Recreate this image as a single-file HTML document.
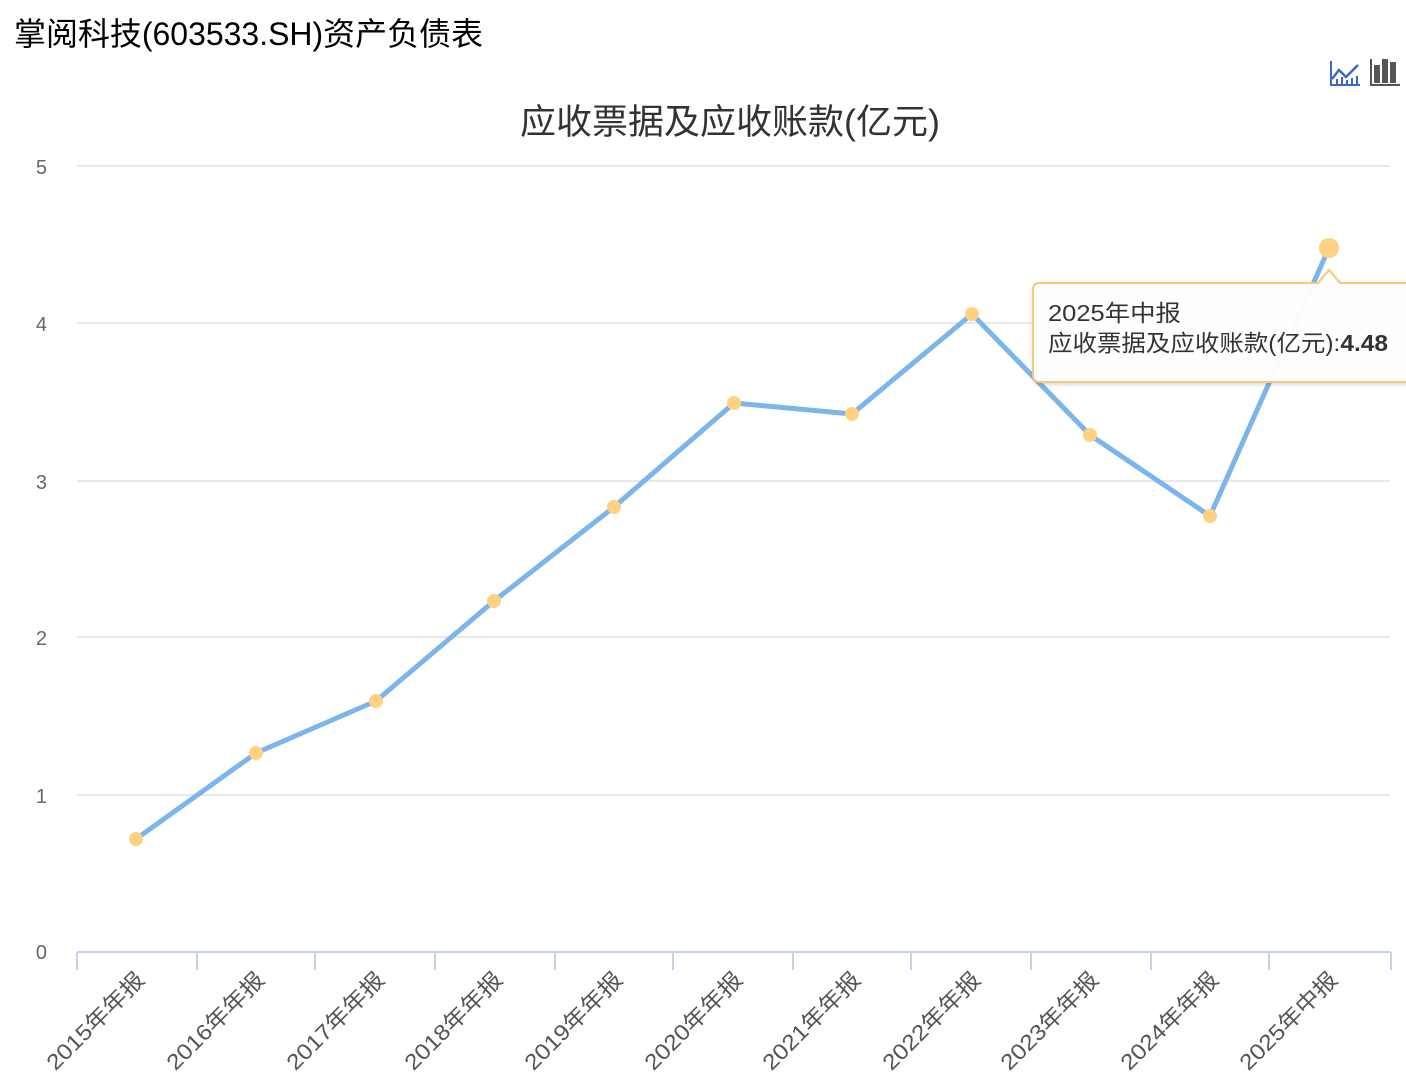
<!DOCTYPE html>
<html><head><meta charset="utf-8"><style>
html,body{margin:0;padding:0;background:#fff;width:1406px;height:1084px;overflow:hidden}
svg{display:block}
.cjk{font-family:"Liberation Sans","Noto Sans CJK SC",sans-serif}
</style></head><body>
<svg width="1406" height="1084" viewBox="0 0 1406 1084" xmlns="http://www.w3.org/2000/svg" class="cjk">
<text x="14" y="45" font-size="32" fill="#000" textLength="469" lengthAdjust="spacingAndGlyphs">掌阅科技(603533.SH)资产负债表</text>
<g fill="#3f67c4">
<rect x="1330" y="61" width="2" height="25"/>
<rect x="1330" y="84" width="30" height="2"/>
<polyline points="1332,79 1339,70 1346,77 1358,65" fill="none" stroke="#3f67c4" stroke-width="2.5"/>
<rect x="1336" y="79" width="2" height="5"/><rect x="1341" y="77" width="2" height="7"/><rect x="1346" y="80" width="2" height="4"/><rect x="1351" y="78" width="2" height="6"/><rect x="1356" y="76" width="2" height="8"/>
</g>
<g fill="#555">
<rect x="1370" y="59" width="2" height="27"/><rect x="1370" y="84" width="30" height="2"/>
<rect x="1374" y="65" width="6" height="18"/><rect x="1382" y="59" width="6" height="24"/><rect x="1390" y="62" width="6" height="21"/>
</g>
<text x="520" y="134" font-size="35" fill="#333" textLength="420" lengthAdjust="spacingAndGlyphs">应收票据及应收账款(亿元)</text>
<g stroke="#e0e0e0" stroke-width="1.5">
<line x1="77" y1="166" x2="1390" y2="166"/><line x1="77" y1="323" x2="1390" y2="323"/>
<line x1="77" y1="481" x2="1390" y2="481"/><line x1="77" y1="637" x2="1390" y2="637"/>
<line x1="77" y1="795" x2="1390" y2="795"/>
</g>
<g font-size="20" fill="#666" text-anchor="end">
<text x="47" y="174">5</text><text x="47" y="331">4</text><text x="47" y="489">3</text>
<text x="47" y="645">2</text><text x="47" y="803">1</text><text x="47" y="959">0</text>
</g>
<g stroke="#c8d3e8" stroke-width="2">
<line x1="77" y1="952" x2="1391" y2="952"/>
<line x1="77" y1="952" x2="77" y2="970"/><line x1="197" y1="952" x2="197" y2="970"/><line x1="315" y1="952" x2="315" y2="970"/><line x1="435" y1="952" x2="435" y2="970"/><line x1="555" y1="952" x2="555" y2="970"/><line x1="673" y1="952" x2="673" y2="970"/><line x1="793" y1="952" x2="793" y2="970"/><line x1="911" y1="952" x2="911" y2="970"/><line x1="1031" y1="952" x2="1031" y2="970"/><line x1="1151" y1="952" x2="1151" y2="970"/><line x1="1269" y1="952" x2="1269" y2="970"/><line x1="1391" y1="952" x2="1391" y2="970"/>
</g>
<g font-size="22" fill="#555" text-anchor="end">
<text transform="translate(146,981) rotate(-45)" textLength="128" lengthAdjust="spacingAndGlyphs">2015年年报</text>
<text transform="translate(266,981) rotate(-45)" textLength="128" lengthAdjust="spacingAndGlyphs">2016年年报</text>
<text transform="translate(386,981) rotate(-45)" textLength="128" lengthAdjust="spacingAndGlyphs">2017年年报</text>
<text transform="translate(504,981) rotate(-45)" textLength="128" lengthAdjust="spacingAndGlyphs">2018年年报</text>
<text transform="translate(624,981) rotate(-45)" textLength="128" lengthAdjust="spacingAndGlyphs">2019年年报</text>
<text transform="translate(744,981) rotate(-45)" textLength="128" lengthAdjust="spacingAndGlyphs">2020年年报</text>
<text transform="translate(862,981) rotate(-45)" textLength="128" lengthAdjust="spacingAndGlyphs">2021年年报</text>
<text transform="translate(982,981) rotate(-45)" textLength="128" lengthAdjust="spacingAndGlyphs">2022年年报</text>
<text transform="translate(1100,981) rotate(-45)" textLength="128" lengthAdjust="spacingAndGlyphs">2023年年报</text>
<text transform="translate(1220,981) rotate(-45)" textLength="128" lengthAdjust="spacingAndGlyphs">2024年年报</text>
<text transform="translate(1339,981) rotate(-45)" textLength="128" lengthAdjust="spacingAndGlyphs">2025年中报</text>
</g>
<polyline points="136,839 256,753 376,701 494,601 614,507 734,403 852,414 972,314 1090,435 1210,516 1329,248" fill="none" stroke="#7cb5ec" stroke-width="5" stroke-linejoin="round"/>
<g fill="#ffd180">
<circle cx="136" cy="839" r="7"/><circle cx="256" cy="753" r="7"/><circle cx="376" cy="701" r="7"/><circle cx="494" cy="601" r="7"/><circle cx="614" cy="507" r="7"/><circle cx="734" cy="403" r="7"/><circle cx="852" cy="414" r="7"/><circle cx="972" cy="314" r="7"/><circle cx="1090" cy="435" r="7"/><circle cx="1210" cy="516" r="7"/><circle cx="1329" cy="248" r="10"/>
</g>
<path d="M1040,283 L1318,283 L1329,270 L1340,283 L1410,283 L1410,382 L1040,382 Q1033,382 1033,375 L1033,290 Q1033,283 1040,283 Z" fill="#fff" fill-opacity="0.96" stroke="#f7c97a" stroke-width="2" style="filter:drop-shadow(1px 2px 2px rgba(0,0,0,0.15))"/>
<text x="1048" y="321" font-size="23" fill="#333" textLength="133" lengthAdjust="spacingAndGlyphs">2025年中报</text>
<text x="1048" y="351" font-size="23" fill="#333" textLength="340" lengthAdjust="spacingAndGlyphs">应收票据及应收账款(亿元):<tspan font-weight="bold">4.48</tspan></text>
</svg>
</body></html>
